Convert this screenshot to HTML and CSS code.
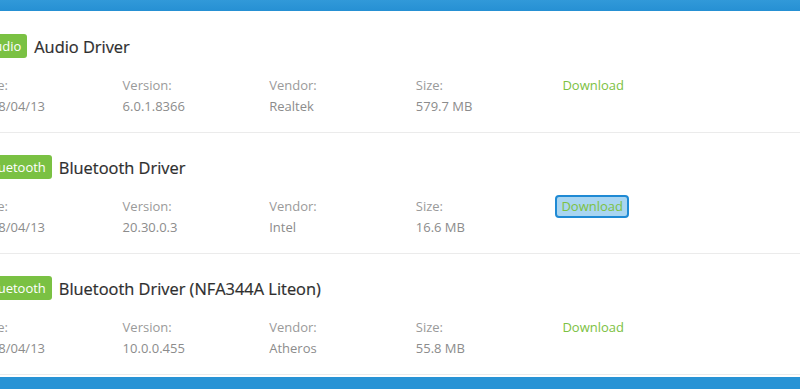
FILE: index.html
```html
<!DOCTYPE html>
<html>
<head>
<meta charset="utf-8">
<link rel="stylesheet" href="styles.css">
</head>
<body>
<div class="bar bar-top"></div>
<div class="list">
  <div class="item">
    <div class="item-head">
      <span class="badge">Audio</span>
      <span class="title">Audio Driver</span>
    </div>
    <div class="fields">
      <div class="field"><div class="label">Date:</div><div class="value">2018/04/13</div></div>
      <div class="field"><div class="label">Version:</div><div class="value">6.0.1.8366</div></div>
      <div class="field"><div class="label">Vendor:</div><div class="value">Realtek</div></div>
      <div class="field"><div class="label">Size:</div><div class="value">579.7 MB</div></div>
      <div class="field"><a class="download" href="#">Download</a></div>
    </div>
  </div>
  <div class="item">
    <div class="item-head">
      <span class="badge">Bluetooth</span>
      <span class="title">Bluetooth Driver</span>
    </div>
    <div class="fields">
      <div class="field"><div class="label">Date:</div><div class="value">2018/04/13</div></div>
      <div class="field"><div class="label">Version:</div><div class="value">20.30.0.3</div></div>
      <div class="field"><div class="label">Vendor:</div><div class="value">Intel</div></div>
      <div class="field"><div class="label">Size:</div><div class="value">16.6 MB</div></div>
      <div class="field"><a class="download focused" href="#">Download</a></div>
    </div>
  </div>
  <div class="item">
    <div class="item-head">
      <span class="badge">Bluetooth</span>
      <span class="title">Bluetooth Driver (NFA344A Liteon)</span>
    </div>
    <div class="fields">
      <div class="field"><div class="label">Date:</div><div class="value">2018/04/13</div></div>
      <div class="field"><div class="label">Version:</div><div class="value">10.0.0.455</div></div>
      <div class="field"><div class="label">Vendor:</div><div class="value">Atheros</div></div>
      <div class="field"><div class="label">Size:</div><div class="value">55.8 MB</div></div>
      <div class="field"><a class="download" href="#">Download</a></div>
    </div>
  </div>
</div>
<div class="gap"></div>
<div class="bar bar-bottom"></div>
</body>
</html>
```
FILE: styles.css
```css
html, body {
  margin: 0;
  padding: 0;
  background: #fff;
  overflow: hidden;
}
body {
  font-family: "Open Sans", "Noto Sans", sans-serif;
  width: 800px;
  height: 389px;
}
.bar {
  background: #2893d5;
}
.bar-top {
  height: 11px;
  background: linear-gradient(#3199d9, #2690d3);
}
.bar-bottom {
  height: 12px;
}
.gap {
  height: 2px;
}
.list {
  margin-left: -24px;
  width: 840px;
}
.item {
  padding: 23px 0 15px 0;
  border-bottom: 1px solid #ebebeb;
}
.item + .item {
  padding-top: 22px;
}
.item-head {
  display: flex;
  align-items: center;
  gap: 7px;
  height: 24px;
  padding-left: 4px;
}
.badge {
  background: #7ac143;
  color: #fff;
  font-size: 13px;
  line-height: 24px;
  height: 24px;
  padding: 0 6px;
  border-radius: 3px;
}
.title {
  font-size: 16.4px;
  color: #2e2e2e;
  font-weight: 500;
  -webkit-text-stroke: 0.2px #2e2e2e;
}
.fields {
  display: grid;
  grid-template-columns: repeat(5, 146.6px);
  margin-top: 17px;
  align-items: start;
}
.label {
  font-size: 13px;
  line-height: 20px;
  color: #9a9a9a;
}
.value {
  font-size: 13px;
  line-height: 22px;
  color: #8c8c8c;
}
.download {
  display: inline-block;
  font-size: 13px;
  line-height: 20px;
  height: 20px;
  vertical-align: top;
  color: #7cc142;
  text-decoration: none;
}
.download.focused {
  margin-left: -7px;
  margin-top: -1px;
  padding: 0 4px;
  height: 19px;
  background: #a9d5f1;
  border: 2px solid #1f8ad4;
  border-radius: 4px;
  line-height: 19px;
}
```
